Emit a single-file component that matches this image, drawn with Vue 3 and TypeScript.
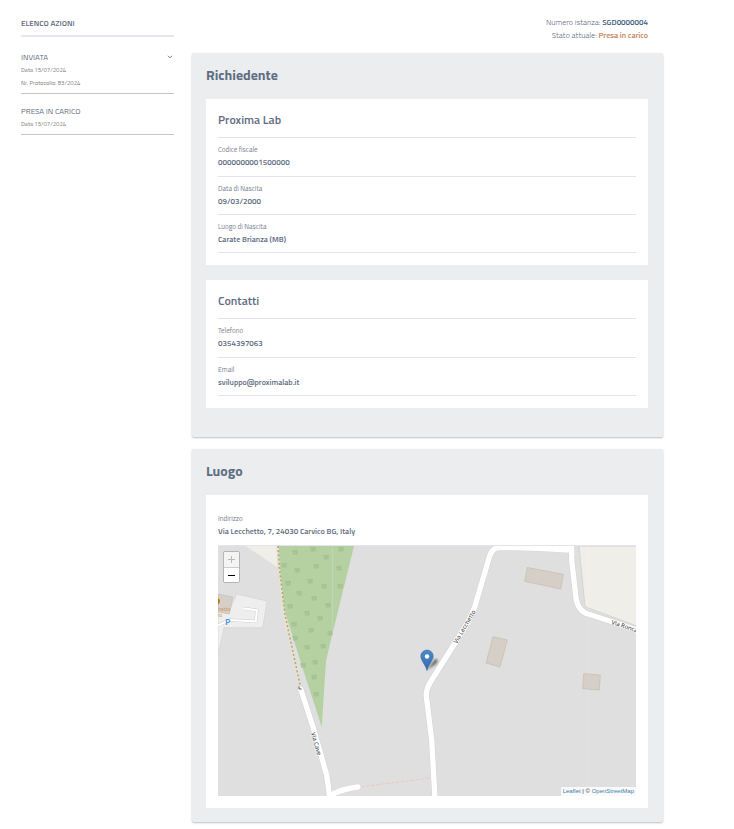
<script setup lang="ts">
import { ref } from 'vue'

interface Field {
  label: string
  value: string
}
interface FieldCard {
  title: string
  fields: Field[]
}
interface Action {
  name: string
  notes: string[]
  expandable: boolean
}

const actions: Action[] = [
  { name: 'INVIATA', notes: ['Data 15/07/2024', 'Nr. Protocollo: 83/2024'], expandable: true },
  { name: 'PRESA IN CARICO', notes: ['Data 15/07/2024'], expandable: false },
]

const cards: FieldCard[] = [
  {
    title: 'Proxima Lab',
    fields: [
      { label: 'Codice fiscale', value: '0000000001500000' },
      { label: 'Data di Nascita', value: '09/03/2000' },
      { label: 'Luogo di Nascita', value: 'Carate Brianza (MB)' },
    ],
  },
  {
    title: 'Contatti',
    fields: [
      { label: 'Telefono', value: '0354397063' },
      { label: 'Email', value: 'sviluppo@proximalab.it' },
    ],
  },
]

// Tree symbols scattered over the wooded area of the map
const trees: [number, number][] = [
  [77, 6], [95, 3], [108, 11], [123, 3], [66, 19], [79, 24], [98, 20], [121, 22],
  [70, 37], [92, 35], [106, 40], [122, 40], [81, 47], [96, 52], [72, 60], [110, 59],
  [89, 67], [102, 72], [76, 78], [93, 84], [77, 92], [112, 87], [89, 101], [105, 100],
  [97, 116], [85, 119], [96, 131], [98, 148],
]

const maxZoom = 18
const zoom = ref(maxZoom)
</script>

<template>
  <div class="page">
    <aside class="sidebar">
      <h2 class="sidebar-title">ELENCO AZIONI</h2>
      <ul class="actions">
        <li v-for="action in actions" :key="action.name" class="action">
          <div class="action-head">
            <span>{{ action.name }}</span>
            <button v-if="action.expandable" class="toggle" type="button" :aria-label="action.name">
              <svg viewBox="0 0 8 8" width="8" height="8">
                <path d="M2 2.8 4 4.8 6 2.8" fill="none" stroke="#5f6972" stroke-width="0.900" />
              </svg>
            </button>
          </div>
          <p v-for="note in action.notes" :key="note" class="note">{{ note }}</p>
        </li>
      </ul>
    </aside>

    <main class="content">
      <header class="status">
        <p>Numero istanza: <strong class="number">SGD0000004</strong></p>
        <p>Stato attuale: <strong class="state">Presa in carico</strong></p>
      </header>

      <section class="panel applicant">
        <h1 class="panel-title">Richiedente</h1>
        <article v-for="card in cards" :key="card.title" class="card">
          <h2 class="card-title">{{ card.title }}</h2>
          <dl class="fields">
            <div v-for="field in card.fields" :key="field.label" class="field">
              <dt>{{ field.label }}</dt>
              <dd>{{ field.value }}</dd>
            </div>
          </dl>
        </article>
      </section>

      <section class="panel">
        <h1 class="panel-title">Luogo</h1>
        <article class="card">
          <dl class="fields">
            <div class="field">
              <dt>Indirizzo</dt>
              <dd>Via Lecchetto, 7, 24030 Carvico BG, Italy</dd>
            </div>
          </dl>
          <div class="map">
            <svg class="map-canvas" viewBox="0 0 418 250" preserveAspectRatio="xMidYMid slice">
              <defs>
                <g id="tree" fill="#a8c796" stroke="#9dbe8c" stroke-width="0.500">
                  <path d="M-2.200 -1.500H-0.300V0H-2.200ZM0.400 -1.800H2.400V-0.300H0.400ZM-1.600 0.700H0.300V2.200H-1.600ZM1 0.500H2.300V2H1Z" />
                </g>
                <linearGradient id="pin-fill" x1="0" y1="0" x2="0" y2="1">
                  <stop offset="0" stop-color="#4b8ac9" />
                  <stop offset="1" stop-color="#3768b0" />
                </linearGradient>
                <filter id="soft" x="-50%" y="-50%" width="200%" height="200%">
                  <feGaussianBlur stdDeviation="1.200" />
                </filter>
              </defs>
              <rect width="418" height="250" fill="#dfdfdf" />
              <path d="M27.700 0H59V21Z" fill="#efeee8" />
              <path d="M361 0H420V80.400L367 60.700Z" fill="#efeee8" stroke="#d0d0cc" stroke-width="0.800" />
              <path d="M60 0H136L113.700 90.700 108 115 103.700 180.700 82 114 68 69 60.500 31Z" fill="#b5d0a1" />
              <use v-for="([x, y], i) in trees" :key="i" href="#tree" :x="x" :y="y" />
              <path d="M114.500 0V87M370 0V250" stroke="#fff" stroke-opacity="0.250" stroke-width="0.600" />

              <path d="M59.500 0 60.500 21 66 69 77 118 81.500 140" fill="none" stroke="#e6e2d2" stroke-width="2.600" />
              <path d="M60 0 61.300 21 67 69 78 120 82 139" fill="none" stroke="#b8a878" stroke-width="1.600" stroke-dasharray="2 2.200" />

              <path d="M18.700 48 49 55 44.700 81.700H6L0 109V66H11Z" fill="#eeeeee" stroke="#d2d2d2" stroke-width="0.600" />
              <path d="M0 48 14.700 51 11.300 68 0 66Z" fill="#d6cfc7" stroke="#c5bdb3" stroke-width="0.600" />
              <path d="M25 62.300 39 64.200 37.700 75.300 12 74 0 79.500" fill="none" stroke="#cacaca" stroke-width="3" />
              <path d="M25 62.300 39 64.200 37.700 75.300 12 74 0 79.500" fill="none" stroke="#fff" stroke-width="2.200" />
              <path d="M0 52.500Q2 52.500 2 55T0 58.500Z" fill="#c77400" />
              <text class="poi" x="0" y="65">hetto</text>
              <text class="poi" x="0" y="71">io</text>
              <text class="parking" x="7" y="79">P</text>

              <g fill="#d6cfc7" stroke="#c5bbaf" stroke-width="0.700">
                <path d="M309.300 21.500 345.300 28.300 342.700 43 306.700 35.300Z" />
                <path d="M275 90.700 289.300 94 282 121 268 117Z" />
                <path d="M365.700 127.700 382.300 129 381.300 144 364.700 142.700Z" />
              </g>

              <path d="M143 240.700 212.700 232" stroke="#eec0ba" stroke-width="0.700" stroke-dasharray="3.500 1.500" />
              <g fill="none" stroke-linecap="round" stroke-linejoin="round">
                <g stroke="#cfcfcf" stroke-width="6.200">
                  <path d="M82.700 143 95 181 108.700 229 112 253M113 249Q124 243 140 241" />
                  <path d="M217 253 213.700 194 208.300 150Q207.500 144 213.700 134L242 89Q252 74 257 60L270.500 14Q273 2.500 280 1.500 312 1 350 4" />
                  <path d="M330 -3 353.700 1V14L358 52Q360 65 370 68L421 84.500" />
                </g>
                <g stroke="#fff" stroke-width="5.400">
                  <path d="M82.700 143 95 181 108.700 229 112 253M113 249Q124 243 140 241" />
                  <path d="M217 253 213.700 194 208.300 150Q207.500 144 213.700 134L242 89Q252 74 257 60L270.500 14Q273 2.500 280 1.500 312 1 350 4" />
                  <path d="M330 -3 353.700 1V14L358 52Q360 65 370 68L421 84.500" />
                </g>
              </g>
              <path d="M81 140.500V143H83.500" fill="none" stroke="#555" stroke-width="1" />

              <text class="street" transform="translate(93 187) rotate(74)">Via Cave</text>
              <text class="street" transform="translate(239 98) rotate(-60)">Via Lecchetto</text>
              <text class="street" transform="translate(393 78) rotate(18)">Via Ronca</text>

              <path d="M209 124 217 113Q222 113 218 118Z" fill="#000" fill-opacity="0.500" filter="url(#soft)" />
              <path d="M209 124.500C208 119.500 202.800 114.500 202.800 110.200A6.200 6.200 0 0 1 215.200 110.200C215.200 114.500 210 119.500 209 124.500Z" fill="url(#pin-fill)" stroke="#3a6da8" stroke-width="0.600" />
              <circle cx="209" cy="110.500" r="2.200" fill="#fff" />
            </svg>
            <div class="zoom-control">
              <button type="button" aria-label="Zoom in" :disabled="zoom >= maxZoom" @click="zoom++">
                <svg viewBox="0 0 9 9" width="9" height="9"><path d="M1 4.500H8M4.500 1V8" /></svg>
              </button>
              <button type="button" aria-label="Zoom out" :disabled="zoom <= 0" @click="zoom--">
                <svg viewBox="0 0 9 9" width="9" height="9"><path d="M1 4.500H8" /></svg>
              </button>
            </div>
            <div class="attribution"><a href="#">Leaflet</a> | © <a href="#">OpenStreetMap</a></div>
          </div>
        </article>
      </section>
    </main>
  </div>
</template>

<style>
body {
  background: #fff;
}
</style>

<style scoped>
.page {
  display: flex;
  gap: 18px;
  padding: 16px 71px 0 21px;
  font-family: 'Titillium Web', Roboto, 'Liberation Sans', sans-serif;
  color: #5f6d82;
}

h1,
h2,
p,
ul,
dl,
dd {
  margin: 0;
  padding: 0;
}

.sidebar {
  flex: 0 0 153px;
}

.sidebar-title {
  padding: 0 0 5px;
  border-bottom: 2px solid #e6e6f2;
  font-size: 8px;
  line-height: 14px;
  font-weight: 600;
}

.actions {
  list-style: none;
}

.action {
  padding: 14px 0 4px;
  border-bottom: 1px solid #c5c7c9;
}

.action + .action {
  padding-top: 11px;
}

.action-head {
  display: flex;
  justify-content: space-between;
  align-items: center;
  font-size: 8px;
  line-height: 12px;
}

.toggle {
  display: flex;
  padding: 0;
  border: 0;
  background: none;
}

.note {
  color: #808080;
  font-size: 6px;
  line-height: 13px;
}

.content {
  flex: 1;
  min-width: 0;
}

.status {
  padding: 0 15px 11px 0;
  text-align: right;
  font-size: 8px;
  line-height: 13px;
  font-weight: 300;
}

.status strong {
  font-weight: 600;
}

.number {
  color: #45607e;
}

.state {
  color: #c48058;
}

.panel {
  margin-bottom: 12px;
  padding: 12px 15px 14px 14px;
  border-radius: 2px;
  background: #ebedee;
  box-shadow: 0 1px 2px rgba(0, 0, 0, 0.25);
}

.panel:last-child {
  margin-bottom: 6px;
}

.applicant {
  padding-bottom: 29px;
}

.panel-title {
  margin-bottom: 14px;
  font-size: 14px;
  line-height: 20px;
  font-weight: 700;
}

.card {
  padding: 12px;
  background: #fff;
}

.card + .card {
  margin-top: 15px;
}

.card-title {
  padding-bottom: 8px;
  border-bottom: 1px solid #e3e3ef;
  font-size: 12px;
  line-height: 18px;
  font-weight: 600;
}

.field {
  padding: 6px 0 7px;
  border-bottom: 1px solid #e3e3ef;
}

.field:first-child {
  padding-bottom: 8px;
}

.field dt {
  color: #76818f;
  font-size: 7px;
  line-height: 12px;
}

.field dd {
  font-size: 8px;
  line-height: 12px;
  font-weight: 600;
}

.map {
  position: relative;
  height: 250px;
  overflow: hidden;
}

.map-canvas {
  display: block;
  width: 100%;
  height: 100%;
}

.street {
  fill: #333;
  stroke: #fff;
  stroke-width: 1px;
  paint-order: stroke;
  font-family: 'Noto Sans', sans-serif;
  font-size: 6px;
}

.poi {
  fill: #c99a55;
  font-family: 'Noto Sans', sans-serif;
  font-size: 5px;
}

.parking {
  fill: #4a97e0;
  font-family: 'Noto Sans', sans-serif;
  font-size: 9px;
  font-weight: 600;
}

.zoom-control {
  position: absolute;
  top: 5px;
  left: 5px;
  border: 1px solid #b4b4b4;
  border-radius: 2px;
}

.zoom-control button {
  display: flex;
  align-items: center;
  justify-content: center;
  width: 15px;
  height: 15px;
  padding: 0;
  border: 0;
  background: #fff;
}

.zoom-control button + button {
  border-top: 1px solid #ccc;
}

.zoom-control path {
  fill: none;
  stroke: #000;
  stroke-width: 1;
}

.zoom-control button:disabled {
  background: #f4f4f4;
}

.zoom-control button:disabled path {
  stroke: #bbb;
}

.attribution {
  position: absolute;
  right: 0;
  bottom: 0;
  padding: 0 2px;
  background: rgba(255, 255, 255, 0.8);
  color: #333;
  font-family: 'Liberation Sans', Arial, sans-serif;
  font-size: 6px;
  line-height: 9px;
}

.attribution a {
  color: #3a83ad;
  text-decoration: none;
}
</style>
